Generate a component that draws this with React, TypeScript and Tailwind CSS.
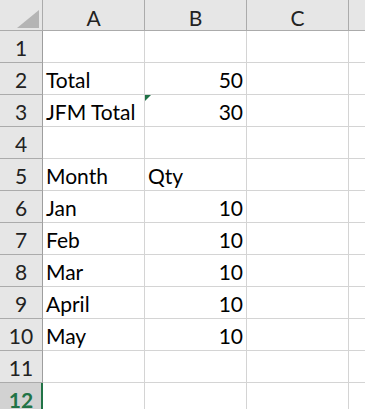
import React from "react";

type Cell = { a?: string; b?: string; tri?: boolean };

const rows: Cell[] = [
  {},
  { a: "Total", b: "50" },
  { a: "JFM Total", b: "30", tri: true },
  {},
  { a: "Month", b: "Qty" },
  { a: "Jan", b: "10" },
  { a: "Feb", b: "10" },
  { a: "Mar", b: "10" },
  { a: "April", b: "10" },
  { a: "May", b: "10" },
  {},
  {},
];

function isNum(s?: string) {
  return !!s && /^\d+$/.test(s);
}

export default function App() {
  return (
    <div
      className="w-[365px] h-[409px] overflow-hidden bg-white text-black"
      style={{ fontFamily: 'Lato, "Liberation Sans", Arial, sans-serif' }}
    >
      {/* Column header row */}
      <div className="flex h-[31px] bg-[#e6e6e6] border-b border-[#ababab] text-[21px] leading-[23px] text-[#222]">
        <div className="relative w-[43px] shrink-0 border-r border-[#ababab]">
          <svg className="absolute left-0 top-0" width="42" height="30" viewBox="0 0 42 30">
            <polygon points="17,28 39,28 39,10" fill="#b4b4b4" />
          </svg>
        </div>
        {["A", "B", "C"].map((c) => (
          <div
            key={c}
            className="w-[102px] shrink-0 border-r border-[#ababab] flex justify-center pt-[6px]"
          >
            {c}
          </div>
        ))}
        <div className="flex-1" />
      </div>

      {rows.map((r, i) => {
        const sel = i === 11;
        return (
          <div key={i} className="flex h-[32px] text-[21px] leading-[23px]">
            <div
              className={
                sel
                  ? "w-[43px] shrink-0 bg-[#d2d2d2] border-b border-[#ababab] border-r-2 border-r-[#217346] flex items-end justify-center pl-[1px] pb-[3px] text-[#217346] font-bold"
                  : "w-[43px] shrink-0 bg-[#e6e6e6] border-b border-[#ababab] border-r border-r-[#9e9e9e] flex items-end justify-center pb-[3px] text-[#222]"
              }
            >
              {i + 1}
            </div>
            <div
              className={
                "w-[102px] shrink-0 border-r border-b border-[#d4d4d4] flex items-end pb-[3px] whitespace-nowrap " +
                (isNum(r.a) ? "justify-end pr-[3px]" : "pl-[3px]")
              }
            >
              {r.a}
            </div>
            <div
              className={
                "relative w-[102px] shrink-0 border-r border-b border-[#d4d4d4] flex items-end pb-[3px] whitespace-nowrap " +
                (isNum(r.b) ? "justify-end pr-[3px]" : "pl-[3px]")
              }
            >
              {r.tri && (
                <svg className="absolute left-0 top-0" width="7" height="7" viewBox="0 0 7 7">
                  <polygon points="0,0 6,0 0,6" fill="#1e7145" />
                </svg>
              )}
              {r.b}
            </div>
            <div className="w-[102px] shrink-0 border-r border-b border-[#d4d4d4]" />
            <div className="flex-1 border-b border-[#d4d4d4]" />
          </div>
        );
      })}
    </div>
  );
}
